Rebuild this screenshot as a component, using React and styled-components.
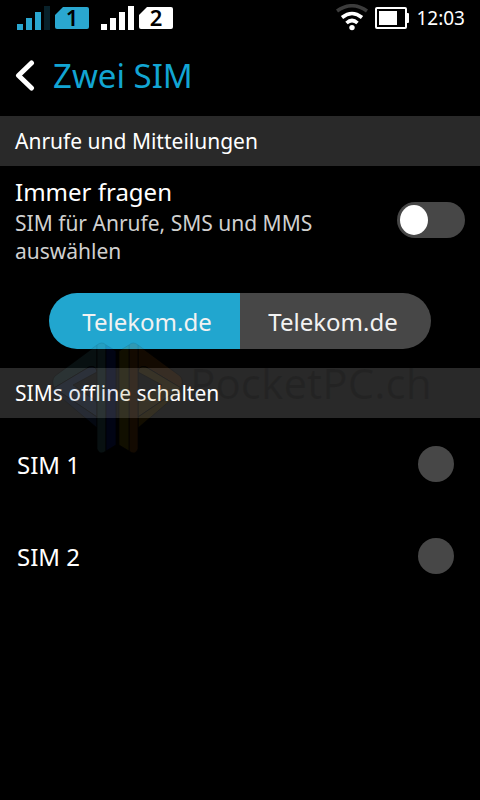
import React, { useState } from 'react';
import styled, { createGlobalStyle } from 'styled-components';

const colors = {
  accent: '#21a6cf',
  title: '#12a5d3',
  bar: '#292929',
  control: '#474747',
  white: '#fff',
  soft: '#d0d0d0',
};

const GlobalStyle = createGlobalStyle`
  *, *::before, *::after {
    box-sizing: border-box;
  }
  body {
    margin: 0;
    background: #000;
    color: ${colors.white};
    font-family: "Noto Sans", "Open Sans", sans-serif;
    font-variant-ligatures: none;
  }
`;

const Screen = styled.div`
  min-height: 100vh;
  background: #000;
`;

const StatusBar = styled.div`
  display: flex;
  align-items: center;
  justify-content: space-between;
  height: 36px;
  padding: 0 15px 0 17px;
`;

const StatusGroup = styled.div`
  display: flex;
  align-items: center;
  gap: ${({ $gap }) => $gap}px;
`;

const Sim = styled.span`
  display: flex;
  align-items: center;
  gap: 5px;
  color: ${({ $color }) => $color};
`;

const SimCard = styled.span`
  display: flex;
  align-items: center;
  justify-content: center;
  width: 34px;
  height: 22px;
  padding-bottom: 2px;
  border-radius: 2px;
  background: currentColor;
  clip-path: polygon(8px 0, 100% 0, 100% 100%, 0 100%, 0 8px);
`;

const SimNumber = styled.span`
  color: #000;
  font-size: 22px;
  font-weight: 600;
  line-height: 22px;
`;

const Clock = styled.time`
  font-size: 19px;
  line-height: 24px;
`;

const Header = styled.header`
  display: flex;
  align-items: center;
  gap: 16px;
  height: 80px;
  padding: 0 15px;
`;

const BackButton = styled.button`
  display: flex;
  padding: 0;
  border: 0;
  background: none;
  color: ${colors.white};
  cursor: pointer;
`;

const Title = styled.h1`
  margin: 0;
  color: ${colors.title};
  font-size: 33px;
  font-weight: 400;
  line-height: 44px;
`;

const SectionTitle = styled.h2`
  height: 50px;
  margin: 0;
  padding: 0 15px;
  background: ${colors.bar};
  font-size: 21px;
  font-weight: 400;
  line-height: 50px;
`;

const Setting = styled.label`
  display: flex;
  align-items: center;
  justify-content: space-between;
  gap: 24px;
  padding: 9px 15px 13px;
  cursor: pointer;
`;

const SettingName = styled.span`
  display: block;
  font-size: 24px;
  line-height: 34px;
`;

const SettingHint = styled.span`
  display: block;
  color: ${colors.soft};
  font-size: 21px;
  line-height: 28px;
`;

const Toggle = styled.input`
  appearance: none;
  flex: none;
  display: flex;
  align-items: center;
  width: 68px;
  height: 36px;
  margin: 0;
  padding: 0 3px;
  border-radius: 18px;
  background: ${colors.control};
  cursor: pointer;

  &::before {
    content: '';
    width: 28px;
    height: 30px;
    border-radius: 50%;
    background: ${colors.white};
  }

  &:checked {
    justify-content: flex-end;
    background: ${colors.accent};
  }
`;

const Segments = styled.div`
  display: flex;
  height: 56px;
  margin: 15px 49px 19px;
  border-radius: 28px;
  overflow: hidden;
`;

const Segment = styled.button`
  flex: 1;
  padding: 0;
  border: 0;
  background: ${({ $active }) => $active ? colors.accent : colors.control};
  color: #f2f2f2;
  font: inherit;
  font-size: 24px;
  cursor: pointer;

  &:first-child {
    padding-left: 5px;
  }
  &:last-child {
    padding-right: 5px;
  }
`;

const SimRow = styled.label`
  display: flex;
  align-items: center;
  justify-content: space-between;
  height: 92px;
  padding: 0 26px 0 17px;
  font-size: 24px;
  cursor: pointer;
`;

const Check = styled.input`
  appearance: none;
  width: 36px;
  height: 36px;
  margin: 0;
  border-radius: 50%;
  background: ${colors.control};
  cursor: pointer;

  &:checked {
    background: ${colors.accent};
  }
`;

const MarkedArea = styled.section`
  position: relative;
`;

const Watermark = styled.svg`
  position: absolute;
  top: -26px;
  left: 50px;
  pointer-events: none;
`;

const SignalBars = ({ weak }) => (
  <svg width="33" height="24" fill="currentColor" aria-hidden="true">
    <rect x="0" y="18" width="6" height="6" />
    <rect x="9" y="12" width="6" height="12" />
    <rect x="18" y="6" width="6" height="18" />
    <rect x="27" y="0" width="6" height="24" opacity={weak ? 0.2 : 1} />
  </svg>
);

const WifiIcon = () => (
  <svg width="32" height="28" viewBox="0 0 32 28" fill="none" stroke="#fff" strokeWidth="3.6" aria-hidden="true">
    <path d="M1 7Q16 -3.5 31 7" stroke="#3c3c3c" />
    <path d="M6 13.5Q16 5.5 26 13.5" />
    <path d="M10.5 19Q16 14 21.5 19" />
    <circle cx="16" cy="23.6" r="2.7" fill="#fff" stroke="none" />
  </svg>
);

const BatteryIcon = () => (
  <svg width="34" height="22" viewBox="0 0 34 22" aria-hidden="true">
    <rect x="1" y="1" width="30" height="20" rx="1" fill="none" stroke="#fff" strokeWidth="2" />
    <rect x="4" y="4" width="18" height="14" fill="#fff" />
    <path d="M32 6h1a1 1 0 0 1 1 1v8a1 1 0 0 1-1 1h-1z" fill="#fff" />
  </svg>
);

const BackIcon = () => (
  <svg width="22" height="32" viewBox="0 0 22 32" fill="none" stroke="currentColor" strokeWidth="5" strokeLinecap="round" strokeLinejoin="round" aria-hidden="true">
    <path d="M16.5 3L3.5 15.5l13 12.5" />
  </svg>
);

// one half of the mark; the other half is its mirror image
const MarkHalf = ({ bar, edge, band, low, mirrored }) => (
  <g transform={mirrored ? 'translate(135 0) scale(-1 1)' : undefined} stroke="#000" strokeOpacity="0.7">
    <path d="M47 3L5 34Q1 38 4 46L39 25Q46 23 47 30Z" fill={bar} />
    <path d="M39 25L4 46L47 75V60L23 43L47 30Q46 23 39 25Z" fill={band} />
    <path d="M4 46L47 75V86L6 51Q3 49 4 46Z" fill={low} />
    <path d="M47 3Q52 -1 56 3V109Q50 114 47 107Z" fill={bar} />
    <path d="M56 3L66 9V103L56 109Z" fill={edge} />
  </g>
);

const SiteMark = () => (
  <Watermark width="390" height="114" aria-hidden="true">
    <g opacity="0.14">
      <MarkHalf bar="#38737a" edge="#0a1c8c" band="#4366a0" low="#1c3c78" />
      <MarkHalf bar="#8a4a0c" edge="#7c6a00" band="#927020" low="#806000" mirrored />
    </g>
    <text x="140" y="57" fill="#000" fillOpacity="0.12" fontSize="42">PocketPC.ch</text>
  </Watermark>
);

const App = () => {
  const [active, setActive] = useState(0);

  return (
    <Screen>
      <GlobalStyle />
      <StatusBar>
        <StatusGroup $gap={12}>
          <Sim $color="#2aa7d0">
            <SignalBars weak />
            <SimCard><SimNumber>1</SimNumber></SimCard>
          </Sim>
          <Sim $color={colors.white}>
            <SignalBars />
            <SimCard><SimNumber>2</SimNumber></SimCard>
          </Sim>
        </StatusGroup>
        <StatusGroup $gap={7}>
          <WifiIcon />
          <BatteryIcon />
          <Clock>12:03</Clock>
        </StatusGroup>
      </StatusBar>
      <Header>
        <BackButton type="button" aria-label="Zurück"><BackIcon /></BackButton>
        <Title>Zwei SIM</Title>
      </Header>
      <section>
        <SectionTitle>Anrufe und Mitteilungen</SectionTitle>
        <Setting>
          <span>
            <SettingName>Immer fragen</SettingName>
            <SettingHint>SIM für Anrufe, SMS und MMS auswählen</SettingHint>
          </span>
          <Toggle type="checkbox" role="switch" />
        </Setting>
        <Segments role="group" aria-label="SIM">
          {['Telekom.de', 'Telekom.de'].map((name, i) => (
            <Segment key={i} type="button" $active={active === i} aria-pressed={active === i} onClick={() => setActive(i)}>
              {name}
            </Segment>
          ))}
        </Segments>
      </section>
      <MarkedArea>
        <SectionTitle>SIMs offline schalten</SectionTitle>
        {['SIM 1', 'SIM 2'].map((name) => (
          <SimRow key={name}>
            {name}
            <Check type="checkbox" />
          </SimRow>
        ))}
        <SiteMark />
      </MarkedArea>
    </Screen>
  );
};

export default App;
